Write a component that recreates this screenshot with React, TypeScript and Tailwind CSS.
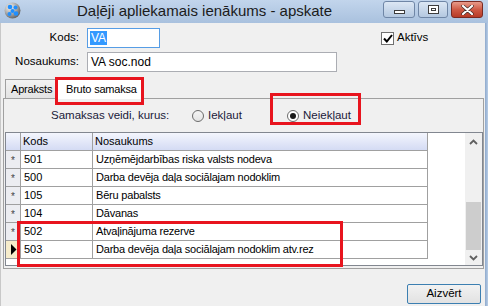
import React from "react";

const rows = [
  { kods: "501", nos: "Uzņēmējdarbības riska valsts nodeva" },
  { kods: "500", nos: "Darba devēja daļa sociālajam nodoklim" },
  { kods: "105", nos: "Bēru pabalsts" },
  { kods: "104", nos: "Dāvanas" },
  { kods: "502", nos: "Atvaļinājuma rezerve" },
  { kods: "503", nos: "Darba devēja daļa sociālajam nodoklim atv.rez", current: true },
];

function AppIcon() {
  return (
    <svg width="17" height="17" viewBox="0 0 17 17">
      <defs>
        <radialGradient id="g" cx="35%" cy="30%" r="70%">
          <stop offset="0%" stopColor="#f4f4f4" />
          <stop offset="60%" stopColor="#a8a8a8" />
          <stop offset="100%" stopColor="#6a6a6a" />
        </radialGradient>
      </defs>
      <circle cx="8.5" cy="8.5" r="8" fill="url(#g)" />
      <circle cx="6" cy="5" r="2.3" fill="#1f8fff" />
      <circle cx="11.5" cy="5.5" r="2" fill="#1f8fff" />
      <circle cx="8.5" cy="9" r="2" fill="#1f8fff" />
      <circle cx="5.5" cy="12" r="2" fill="#1f8fff" />
      <circle cx="12" cy="11.5" r="2.3" fill="#1f8fff" />
    </svg>
  );
}

export default function App() {
  const ui = { fontFamily: '"Liberation Sans", Arial, sans-serif' };
  return (
    <div className="w-[488px] h-[306px] overflow-hidden flex flex-col bg-[#a9c0dc]" style={ui}>
      {/* Title bar */}
      <div className="h-[23px] flex items-start bg-gradient-to-b from-[#c2d5ec] to-[#a9c1de] shrink-0">
        <div className="ml-[4px] mt-[2px]">
          <AppIcon />
        </div>
        <div className="ml-[56px] mt-[1px] text-[15px] leading-[20px] text-[#1b1b1b]">
          Daļēji apliekamais ienākums - apskate
        </div>
        <div className="ml-auto mt-[1px] mr-[5px] flex gap-[3px]">
          <div className="w-[32px] h-[17px] rounded-[3px] border border-[#6f86a6] bg-gradient-to-b from-[#dce7f4] to-[#b4c8e0] flex items-center justify-center">
            <div className="w-[11px] h-[4px] border border-[#3d3d3d] bg-white mt-[4px]" />
          </div>
          <div className="w-[30px] h-[17px] rounded-[3px] border border-[#6f86a6] bg-gradient-to-b from-[#dce7f4] to-[#b4c8e0] flex items-center justify-center">
            <div className="w-[11px] h-[9px] border border-[#3d3d3d] bg-white flex items-center justify-center">
              <div className="w-[5px] h-[3px] border border-[#3d3d3d]" />
            </div>
          </div>
          <div className="w-[32px] h-[17px] rounded-[3px] border border-[#7a2a22] bg-gradient-to-b from-[#e79a8a] via-[#cf5a45] to-[#b73a26] flex items-center justify-center">
            <svg width="13" height="10" viewBox="0 0 13 10">
              <path d="M2 1 L11 9 M11 1 L2 9" stroke="#3a2a28" strokeWidth="3.4" strokeLinecap="round" />
              <path d="M2 1 L11 9 M11 1 L2 9" stroke="#ffffff" strokeWidth="2.2" strokeLinecap="round" />
            </svg>
          </div>
        </div>
      </div>

      {/* Window body */}
      <div className="flex-1 flex">
        <div className="w-[485px] bg-[#f0f0f0] flex flex-col border-l border-[#c8c8c8]">
          {/* Kods row */}
          <div className="flex items-center mt-[5px] h-[20px]">
            <div className="w-[78px] text-right text-[11.5px] text-black">Kods:</div>
            <div className="ml-[8px] w-[73px] h-[20px] border border-[#569de5] bg-white flex items-center pl-[2px]">
              <span className="bg-[#3399ff] text-white text-[12px] leading-[14px] px-[1px]">VA</span>
            </div>
            <div className="ml-[221px] flex items-center">
              <div className="w-[13px] h-[13px] border border-[#707070] bg-white flex items-center justify-center">
                <svg width="10" height="9" viewBox="0 0 10 9">
                  <path d="M1 4.5 L3.8 7.5 L9 1" stroke="#000" strokeWidth="2" fill="none" />
                </svg>
              </div>
              <span className="ml-[3px] text-[11.5px] text-black">Aktīvs</span>
            </div>
          </div>

          {/* Nosaukums row */}
          <div className="flex items-center mt-[4px] h-[20px]">
            <div className="w-[78px] text-right text-[11.5px] text-black">Nosaukums:</div>
            <div className="ml-[8px] w-[250px] h-[20px] border border-[#abadb3] bg-white flex items-center pl-[3px] text-[12px] text-black">
              VA soc.nod
            </div>
          </div>

          {/* Tabs */}
          <div className="flex items-end mt-[5px] h-[21px] pl-[4px]">
            <div className="w-[53px] h-[19px] border border-[#a0a0a0] border-b-0 bg-gradient-to-b from-[#f2f2f2] to-[#e3e3e3] text-[11px] leading-[18px] pl-[5px] tracking-[-0.2px] text-black whitespace-nowrap">
              Apraksts
            </div>
            <div className="relative w-[85px] h-[21px] border border-[#a0a0a0] border-b-0 bg-white text-[11px] leading-[20px] pl-[8px] tracking-[-0.2px] text-black -mb-px z-10 -ml-[1px] whitespace-nowrap">
              Bruto samaksa
              <div className="absolute left-[-3px] top-[-2px] w-[89px] h-[28px] border-[3px] border-[#e8141e]" />
            </div>
          </div>

          {/* Panel */}
          <div className="ml-[2px] w-[481px] h-[171px] border border-[#a0a0a0] bg-[#f0f0f0] flex flex-col">
            {/* Radio row */}
            <div className="h-[33px] flex items-center text-[11.5px] text-[#1a1a3a] whitespace-nowrap">
              <span className="ml-[47px] w-[141px]">Samaksas veidi, kurus:</span>
              <div className="w-[95px] flex items-center">
                <div className="w-[12px] h-[12px] rounded-full border border-[#6b6b6b] bg-gradient-to-b from-[#f4f4f4] to-[#e4e4e4]" />
                <span className="ml-[4px]">Iekļaut</span>
              </div>
              <div className="relative flex items-center">
                <div className="w-[12px] h-[12px] rounded-full border border-[#6b6b6b] bg-white flex items-center justify-center">
                  <div className="w-[6px] h-[6px] rounded-full bg-[#1a1a1a]" />
                </div>
                <span className="ml-[4px]">Neiekļaut</span>
                <div className="absolute left-[-17px] top-[-14px] w-[91px] h-[32px] border-[3px] border-[#e8141e]" />
              </div>
            </div>

            {/* Grid */}
            <div className="relative ml-[1px] w-[478px] h-[134px] border border-[#828790] bg-white flex" style={{ fontFamily: '"Liberation Sans", Tahoma, sans-serif' }}>
              <div className="w-[422px] flex flex-col">
                {/* header */}
                <div className="flex h-[18px] bg-gradient-to-b from-[#f4f6fd] to-[#d4dbf4] border-b border-[#a0a0a0] text-[11px] text-black">
                  <div className="w-[15px] border-r border-[#a0a0a0]" />
                  <div className="w-[72px] border-r border-[#a0a0a0] pl-[2px] leading-[17px]">Kods</div>
                  <div className="w-[335px] border-r border-[#a0a0a0] pl-[2px] leading-[17px]">Nosaukums</div>
                </div>
                {rows.map((r) => (
                  <div key={r.kods} className="flex h-[18px] border-b border-[#a0a0a0] text-[11px] text-black">
                    <div className={`w-[15px] border-r border-[#a0a0a0] flex items-center justify-center ${r.current ? "bg-[#f6eccb]" : "bg-[#ecedf1]"}`}>
                      {r.current ? (
                        <svg width="7" height="11" viewBox="0 0 7 11">
                          <path d="M1 0 L6.5 5.5 L1 11 Z" fill="#000" />
                        </svg>
                      ) : (
                        <span className="text-[10px] leading-[10px] text-[#444] mt-[3px]">*</span>
                      )}
                    </div>
                    <div className="w-[72px] border-r border-[#a0a0a0] pl-[3px] leading-[17px]">{r.kods}</div>
                    <div className="w-[335px] border-r border-[#a0a0a0] pl-[3px] leading-[17px] tracking-[-0.2px] whitespace-nowrap">{r.nos}</div>
                  </div>
                ))}
              </div>
              <div className="flex-1" />
              {/* scrollbar */}
              <div className="w-[17px] bg-[#f0f0f0] flex flex-col">
                <div className="h-[18px] flex items-center justify-center">
                  <svg width="9" height="6" viewBox="0 0 9 6">
                    <path d="M1 5 L4.5 1.5 L8 5" stroke="#606060" strokeWidth="1.8" fill="none" />
                  </svg>
                </div>
                <div className="h-[51px]" />
                <div className="h-[48px] mx-[1px] bg-[#cdcdcd]" />
                <div className="flex-1 flex items-center justify-center">
                  <svg width="9" height="6" viewBox="0 0 9 6">
                    <path d="M1 1 L4.5 4.5 L8 1" stroke="#606060" strokeWidth="1.8" fill="none" />
                  </svg>
                </div>
              </div>
              <div className="absolute left-[11px] top-[88px] w-[326px] h-[46px] border-[3px] border-[#e8141e]" />
            </div>
          </div>

          {/* Footer */}
          <div className="flex justify-end mt-[15px] pr-[4px]">
            <div className="w-[74px] h-[20px] border border-[#3c7fb1] rounded-[2px] bg-gradient-to-b from-[#f2f2f2] to-[#e2e2e2] text-[11.5px] text-black flex items-center justify-center">
              Aizvērt
            </div>
          </div>
        </div>
        <div className="flex-1 bg-gradient-to-r from-[#8ea9cc] to-[#b8cde6]" />
      </div>
    </div>
  );
}
